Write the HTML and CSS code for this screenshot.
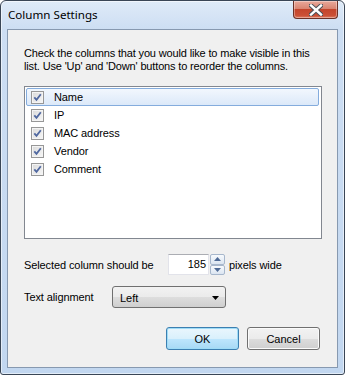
FILE: index.html
```html
<!DOCTYPE html>
<html lang="en">
<head>
    <meta charset="UTF-8">
    <title>Column Settings</title>
    <link rel="stylesheet" href="styles.css">
</head>
<body>
    <div class="window">
        <div class="titlebar">
            <span class="title">Column Settings</span>
            <div class="close">
                <svg width="14" height="12" viewBox="0 0 14 12">
                    <path d="M2 1.5 L12 10.5 M12 1.5 L2 10.5" stroke="#4a4f57" stroke-width="4.4" stroke-linecap="square"/>
                    <path d="M2 1.5 L12 10.5 M12 1.5 L2 10.5" stroke="#ffffff" stroke-width="2.4" stroke-linecap="square"/>
                </svg>
            </div>
        </div>
        <div class="client">
            <p class="intro">Check the columns that you would like to make visible in this<br>list. Use 'Up' and 'Down' buttons to reorder the columns.</p>

            <ul class="columns">
                <li class="row selected"><span class="check"></span>Name</li>
                <li class="row"><span class="check"></span>IP</li>
                <li class="row"><span class="check"></span>MAC address</li>
                <li class="row"><span class="check"></span>Vendor</li>
                <li class="row"><span class="check"></span>Comment</li>
            </ul>

            <div class="field">
                <span class="label label-width">Selected column should be</span>
                <div class="spin">
                    <div class="num">185</div>
                    <div class="spin-btns">
                        <div class="spin-btn">
                            <svg width="7" height="4" viewBox="0 0 7 4"><path d="M0 4 L3.5 0 L7 4 Z" fill="#4e6a96"/></svg>
                        </div>
                        <div class="spin-btn">
                            <svg width="7" height="4" viewBox="0 0 7 4"><path d="M0 0 L7 0 L3.5 4 Z" fill="#4e6a96"/></svg>
                        </div>
                    </div>
                </div>
                <span class="unit">pixels wide</span>
            </div>

            <div class="field field-align">
                <span class="label label-align">Text alignment</span>
                <div class="select">
                    <span>Left</span>
                    <svg width="7" height="4" viewBox="0 0 7 4"><path d="M0 0 L7 0 L3.5 4 Z" fill="#000"/></svg>
                </div>
            </div>

            <div class="buttons">
                <div class="btn btn-default">OK</div>
                <div class="btn">Cancel</div>
            </div>
        </div>
    </div>
</body>
</html>
```

FILE: styles.css
```css
body {
    margin: 0;
    font-family: "Liberation Sans", Arial, sans-serif;
    font-size: 11px;
    color: #000;
}
.window {
    width: 345px;
    height: 375px;
    box-sizing: border-box;
    border: 1px solid #3a4656;
    border-radius: 6px 6px 3px 3px;
    padding: 0 6px 6px;
    background: linear-gradient(to bottom, #dfebf8 0, #cddef3 28px, #c2d7f0 100%);
    box-shadow: inset 0 0 0 1px rgba(255, 255, 255, 0.55);
    display: flex;
    flex-direction: column;
}
.titlebar {
    height: 28px;
    display: flex;
    align-items: flex-start;
}
.title {
    font-family: "Noto Sans", sans-serif;
    font-size: 11.6px;
    padding: 6px 0 0 1px;
    line-height: 16px;
}
.close {
    margin-left: auto;
    width: 45px;
    height: 18px;
    box-sizing: border-box;
    border: 1px solid #6b3127;
    border-top: none;
    border-radius: 0 0 4px 4px;
    background: linear-gradient(to bottom, #e9a99b 0, #d98572 45%, #c4452c 50%, #cb5036 85%, #de7d63 100%);
    box-shadow: inset 0 0 0 1px rgba(255, 255, 255, 0.35);
    display: flex;
    align-items: center;
    justify-content: center;
}
.client {
    flex: 1;
    background: #f0f0f0;
    border: 1px solid #8799b0;
    padding: 17px 15px 0 16px;
    display: flex;
    flex-direction: column;
}
.intro {
    margin: 0;
    line-height: 13px;
    letter-spacing: -0.15px;
}
.columns {
    list-style: none;
    margin: 13px 0 0;
    padding: 1px 2px 0 1px;
    height: 153px;
    box-sizing: border-box;
    background: #fff;
    border: 1px solid #828790;
}
.row {
    height: 18px;
    box-sizing: border-box;
    border: 1px solid transparent;
    border-radius: 2px;
    display: flex;
    align-items: center;
    padding-left: 4px;
    letter-spacing: -0.1px;
}
.row.selected {
    border-color: #84acdd;
    background: linear-gradient(to bottom, #f2f7fd, #dce9f9);
}
.check {
    width: 13px;
    height: 13px;
    box-sizing: border-box;
    border: 1px solid #979797;
    margin-right: 10px;
    background:
        url("data:image/svg+xml,%3Csvg xmlns='http://www.w3.org/2000/svg' width='11' height='11'%3E%3Cpath d='M2.3 5.3 L4.5 7.8 L8.8 2.3' fill='none' stroke='%235068a0' stroke-width='1.8'/%3E%3C/svg%3E") center no-repeat,
        linear-gradient(135deg, #dadada, #f7f7f7);
    box-shadow: inset 0 0 0 1px #f4f4f4;
}
.field {
    display: flex;
    align-items: center;
    margin-top: 15px;
    height: 21px;
}
.field-align {
    margin-top: 11px;
    height: 22px;
}
.label {
    letter-spacing: -0.1px;
}
.label-width {
    width: 144px;
}
.label-align {
    width: 88px;
}
.spin {
    display: flex;
    height: 21px;
}
.num {
    width: 41px;
    box-sizing: border-box;
    background: #fff;
    border: 1px solid #e2e3ea;
    border-top-color: #abadb3;
    text-align: right;
    padding-right: 2px;
    line-height: 19px;
}
.spin-btns {
    margin-left: 1px;
    width: 15px;
    display: flex;
    flex-direction: column;
}
.spin-btn {
    flex: 1;
    box-sizing: border-box;
    border: 1px solid #a7b7cc;
    border-radius: 2px;
    background: linear-gradient(to bottom, #f7fafd, #dbe5f1);
    display: flex;
    align-items: center;
    justify-content: center;
}
.unit {
    margin-left: 4px;
    letter-spacing: -0.1px;
}
.select {
    width: 114px;
    height: 22px;
    box-sizing: border-box;
    border: 1px solid #707070;
    border-radius: 3px;
    background: linear-gradient(to bottom, #f2f2f2 0, #ebebeb 50%, #dddddd 51%, #cfcfcf 100%);
    display: flex;
    align-items: center;
    justify-content: space-between;
    padding: 1px 6px 0 7px;
}
.buttons {
    display: flex;
    justify-content: flex-end;
    gap: 8px;
    margin: 19px 2px 0 0;
}
.btn {
    width: 73px;
    height: 23px;
    box-sizing: border-box;
    border: 1px solid #707070;
    border-radius: 3px;
    background: linear-gradient(to bottom, #f2f2f2 0, #ebebeb 50%, #dddddd 51%, #cfcfcf 100%);
    box-shadow: inset 0 0 0 1px #fbfbfb;
    display: flex;
    align-items: center;
    justify-content: center;
}
.btn-default {
    border-color: #3c7fb1;
    background: linear-gradient(to bottom, #eaf6fd 0, #d9f0fc 50%, #bee6fd 51%, #a7d9f5 100%);
    box-shadow: inset 0 0 0 1px #9fdcf7;
}
```
